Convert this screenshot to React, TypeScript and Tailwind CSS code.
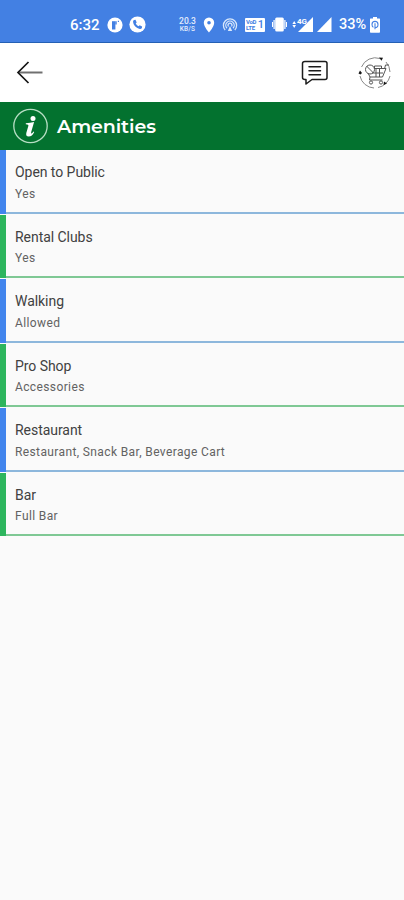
import React from "react";

type Amenity = { title: string; value: string };

const amenities: Amenity[] = [
  { title: "Open to Public", value: "Yes" },
  { title: "Rental Clubs", value: "Yes" },
  { title: "Walking", value: "Allowed" },
  { title: "Pro Shop", value: "Accessories" },
  { title: "Restaurant", value: "Restaurant, Snack Bar, Beverage Cart" },
  { title: "Bar", value: "Full Bar" },
];

function StatusBar() {
  return (
    <header className="flex h-[43px] items-center border-b border-[#2460b4] bg-[#4380e3] pt-[7px] pl-[70px] text-white">
      <span className="w-[30px] text-[15px] leading-[18px] font-medium whitespace-nowrap">6:32</span>
      <svg className="ml-[7px] shrink-0" width="16" height="16" viewBox="0 0 16 16">
        <circle cx="8" cy="8" r="7.6" fill="#fff" />
        <path d="M5 12.500V4.200h3.400v8.300z" fill="#4380e3" />
        <path d="M8.300 4.200h1.400v3.200H8.300M10.800 3.800h1.200v1.200h-1.200z" fill="#4380e3" />
      </svg>
      <svg className="ml-[6px] shrink-0" width="17" height="17" viewBox="0 0 17 17">
        <circle cx="8.5" cy="8.5" r="8.1" fill="#fff" />
        <path d="M5.1 4.1 6.5 3.8 7.7 6.4 6.7 7.5C7.3 8.7 8.3 9.7 9.6 10.3L10.7 9.3 13.1 10.5 12.9 11.9C12.5 12.7 11.7 13 10.8 12.9 7.4 12.4 4.500 9.400 4.100 6.100 4 5.200 4.400 4.500 5.100 4.100Z" fill="#4380e3" />
      </svg>
      <div className="ml-[32px] flex w-[19px] flex-col items-center text-[#e3edfc]">
        <span className="text-[8.5px] leading-[9px] font-medium">20.3</span>
        <span className="text-[6.5px] leading-[7px] font-medium tracking-[0.2px]">KB/S</span>
      </div>
      <svg className="ml-[6px] shrink-0" width="12" height="16" viewBox="0 0 12 16">
        <path fillRule="evenodd" d="M6 .5a5.200 5.200 0 0 0-5.200 5.200C.8 9.700 6 15.500 6 15.500s5.200-5.800 5.200-9.800A5.200 5.200 0 0 0 6 .5Zm0 3.400a1.800 1.800 0 1 1 0 3.600 1.800 1.800 0 0 1 0-3.600Z" fill="#fff" />
      </svg>
      <svg className="ml-[7px] shrink-0" width="16" height="16" viewBox="0 0 16 16" fill="none" stroke="#d8e7fb" strokeWidth="1.3">
        <path d="M3.200 13A6.600 6.600 0 1 1 12.800 13M5 11.300a4.200 4.200 0 1 1 6 0M6.500 9.500a2 2 0 1 1 3 0" />
        <path d="m5.800 14 2.200-5 2.200 5z" fill="#d8e7fb" stroke="none" />
      </svg>
      <div className="ml-[7px] flex h-[14px] w-[20px] shrink-0 items-center justify-between rounded-[1px] bg-white px-[1px] text-[#4380e3]">
        <span className="flex flex-col text-[6px] leading-[6px] font-bold tracking-[-0.3px]"><span>VoD</span><span>LTE</span></span>
        <span className="text-[11px] leading-[13px] font-medium">1</span>
      </div>
      <svg className="ml-[7px] shrink-0" width="15" height="15" viewBox="0 0 15 15" fill="#fff">
        <rect x="3.200" y=".5" width="8.600" height="14" rx="1.500" />
        <path d="M1.500 3h1.200v9H1.500zM0 5h1v5H0zM12.300 3h1.200v9h-1.200zM14 5h1v5h-1z" />
      </svg>
      <svg className="ml-[5px] shrink-0" width="22" height="17" viewBox="0 0 22 17">
        <path d="m2.200 5 1.800 3H.4zM2.200 12 .4 9H4z" fill="#fff" />
        <path d="M21 1v15H6z" fill="#fff" />
        <rect x="4" y="1" width="11" height="7" fill="#4380e3" />
        <text x="5" y="8" fontSize="8" fontWeight="700" fill="#fff">4G</text>
      </svg>
      <svg className="ml-[3px] shrink-0" width="15" height="17" viewBox="0 0 15 17"><path d="M14.500 1v15H0z" fill="#fff" /></svg>
      <span className="ml-[7px] w-[28px] pt-px text-[14.5px] leading-[18px] font-medium whitespace-nowrap">33%</span>
      <svg className="ml-[2px] shrink-0" width="12" height="16" viewBox="0 0 12 16">
        <path d="M4 0h4v1.500h2.500q.500 0 .500.500v13q0 .800-.800.800H1.800Q1 15.800 1 15V2q0-.500.500-.500H4z" fill="#fff" />
        <path d="M4.400 10.400Q3 9.300 3 7.400a3 3 0 0 1 6 0c0 2-1.500 3.200-3 3.200M6 6.300v6" fill="none" stroke="#4380e3" strokeWidth="1.100" />
      </svg>
    </header>
  );
}

function Toolbar() {
  return (
    <nav className="flex h-[59px] items-center bg-white pr-[12px] pl-[16px]">
      <svg width="28" height="26" viewBox="0 0 28 26" fill="none">
        <path d="M2 12.500h24.500" stroke="#707070" strokeWidth="2" />
        <path d="M12.500 2 2 12.500 12.500 23" stroke="#151515" strokeWidth="1.700" />
      </svg>
      <svg className="ml-auto" width="30" height="28" viewBox="0 0 30 28" fill="none" stroke="#1b1b1b" strokeWidth="1.500" strokeLinejoin="round" strokeLinecap="round">
        <path d="M5 2.500h20q2 0 2 2v14q0 2-2 2H12l-6 4.500v-4.500H5q-2.500 0-2.500-2v-14Q2.500 2.500 5 2.500Z" />
        <path d="M9 7.700h11.500M9 11.700h11.500M9 15.700h11.500" />
      </svg>
      <svg className="ml-[28px]" width="34" height="34" viewBox="0 0 34 34" fill="none" stroke="#888" strokeWidth="1">
        <path d="M2 20A15 15 0 0 0 16 32M3.500 11A15 15 0 0 1 22 2.500M28 6a15 15 0 0 1 4 10M32 20A15 15 0 0 1 20 31.500" />
        <g fill="#161616" stroke="none">
          <path d="m21 1.500 4 .3-1.500 3zM.5 17.500l1.500-3 2 2.500-1.500 1.500zM25.500 29l.5-3.500 3 2z" />
        </g>
        <g stroke="#555">
          <circle cx="12" cy="13.500" r="4.500" />
          <path d="m8.500 10 7 7M16 12.500h12l-3.500 8.500H12l-2-4M14 17h11M18 13v8M21.500 13v8M26.500 13l1-4h3.500M12 21l-.5 3h13" />
          <path d="M16.500 10h7v2.500h-7z" />
        </g>
        <circle cx="13" cy="26.500" r="1.600" stroke="#555" />
        <circle cx="23" cy="26.500" r="1.600" stroke="#555" />
      </svg>
    </nav>
  );
}

export default function App() {
  return (
    <main className="min-h-[900px] w-[404px] overflow-hidden bg-[#fafafa] font-[Roboto,sans-serif]">
      <StatusBar />
      <Toolbar />
      <div className="flex h-[48px] items-center bg-[#03722f] pl-[13px] text-white">
        <svg width="36" height="36" viewBox="0 0 36 36">
          <circle cx="17.500" cy="18" r="16.700" fill="none" stroke="#b7dec4" strokeWidth="1.300" />
          <circle cx="20" cy="10.500" r="2.500" fill="#fff" />
          <path d="M12.800 15.300q4.500-.2 8.300-1.300l-2.900 10q-.4 1.800.4 1.500 1-.4 1.800-2l.8.5Q19.200 28.500 15.700 28.500q-3.100 0-2.400-3.500l2.100-7.300q.4-1.400-2.600-1.500z" fill="#fff" />
        </svg>
        <h1 className="ml-[8px] pt-px font-[Montserrat,Inter,sans-serif] text-[19px] leading-[24px] font-semibold tracking-[-0.1px]">Amenities</h1>
      </div>
      <ul>
        {amenities.map((item, i) => (
          <li key={item.title} className={`mb-[1px] flex h-[63.5px] border-l-[6px] ${i % 2 ? "border-[#2db55d]" : "border-[#4285ed]"}`}>
            <div className={`flex-1 border-b-2 pt-[12px] pl-[9px] ${i % 2 ? "border-b-[#7fc894]" : "border-b-[#8db7dc]"}`}>
              <h2 className="text-[14px] leading-[20px] font-normal tracking-[-0.05px] text-[#414141]">{item.title}</h2>
              <p className="mt-[1.5px] text-[12px] leading-[20px] tracking-[0.38px] text-[#626262]">{item.value}</p>
            </div>
          </li>
        ))}
      </ul>
    </main>
  );
}
